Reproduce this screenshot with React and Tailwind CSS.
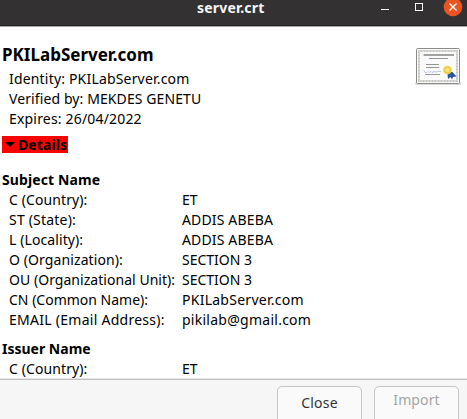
const subject = [
  ["C (Country):", "ET", "tracking-[0.1px]", "tracking-[0px]"],
  ["ST (State):", "ADDIS ABEBA", "tracking-[0.2px]", "tracking-[0.15px]"],
  ["L (Locality):", "ADDIS ABEBA", "tracking-[0.1px]", "tracking-[0.15px]"],
  ["O (Organization):", "SECTION 3", "tracking-[0.1px]", "tracking-[0px]"],
  ["OU (Organizational Unit):", "SECTION 3", "tracking-[0.04px]", "tracking-[0px]"],
  ["CN (Common Name):", "PKILabServer.com", "tracking-[0px]", "tracking-[0.26px]"],
  ["EMAIL (Email Address):", "pikilab@gmail.com", "tracking-[0.27px]", "tracking-[0.26px]"],
];

const issuer = [["C (Country):", "ET", "tracking-[0.1px]", "tracking-[0px]"]];

function Field({ row }) {
  const [label, value, labelTracking, valueTracking] = row;
  return (
    <div className="flex h-5">
      <dt className={`w-[173px] shrink-0 ${labelTracking}`}>{label}</dt>
      <dd className={valueTracking}>{value}</dd>
    </div>
  );
}

function CertificateIcon() {
  return (
    <svg width="48" height="42" viewBox="0 0 48 42" className="shrink-0">
      <rect x="1" y="36" width="46" height="3" rx="1.500" fill="#dadada" />
      <rect x="2.500" y="2.500" width="43" height="35" rx="1" fill="#fafafa" stroke="#8a8a87" />
      <rect x="5" y="5" width="38" height="30" fill="none" stroke="#c6c6c4" strokeWidth="2" />
      <rect x="5" y="5" width="38" height="30" fill="none" stroke="#e8e8e6" strokeDasharray="2 1" />
      <path d="M9.500 9h30.500" stroke="#8a8c8a" strokeWidth="1.600" />
      <path d="M15 12.500h19M12 18.500h13M12 21.500h13M11 28.500h15" stroke="#969694" />
      <path d="M10 24.500l1 2h2l1-1 1 1 2-1 1 1 2-1 2 .5 2-.5h3" fill="none" stroke="#9db5d6" strokeWidth=".7" />
      <path d="M36 26l-2.500 2 .5 5 2.500-2 1.500 2.500 1-2.500 3.500-.5-4-4.500z" fill="#2b559c" />
      <circle cx="33.500" cy="24" r="4" fill="#f3cf35" stroke="#f5da62" strokeDasharray="1.500 1" />
      <circle cx="33.500" cy="24" r="2" fill="#fbe98c" />
    </svg>
  );
}

export default function App() {
  return (
    <div className="flex h-[419px] w-[467px] flex-col overflow-hidden bg-white font-['Noto_Sans','Open_Sans',sans-serif] text-sm leading-5 whitespace-nowrap text-black">
      <header className="flex h-[27px] shrink-0 border-b border-[#aaa] bg-[#333132]">
        <div className="flex h-[26px] w-full border-b border-[#222021] pl-[197px]">
          <h1 className="h-[15px] w-[184px] leading-[15px] font-bold tracking-[0.2px] text-[#f5f5f5]">server.crt</h1>
          <svg width="86" height="25" viewBox="381 0 86 25" fill="none">
            <path d="M381 9.500h8" stroke="#fff" />
            <rect x="415.500" y="3.500" width="7" height="7" stroke="#fff" />
            <circle cx="453" cy="7" r="9.300" fill="#e95420" />
            <path d="M449.500 3.500l7 7M456.500 3.500l-7 7" stroke="#fff" strokeWidth="1.400" />
          </svg>
        </div>
      </header>

      <main className="h-[351px] overflow-hidden pl-0.5">
        <div className="flex h-[102px] justify-between pt-[17px]">
          <div>
            <h2 className="h-[25px] text-[17px] leading-[21px] font-bold">PKILabServer.com</h2>
            <div className="pl-[7px]">
              <p className="tracking-[0.18px]">Identity: PKILabServer.com</p>
              <p className="tracking-[0.1px]">Verified by: MEKDES GENETU</p>
              <p className="tracking-[0.18px]">Expires: 26/04/2022</p>
            </div>
          </div>
          <div className="pt-[2px] pr-[5px]">
            <CertificateIcon />
          </div>
        </div>

        <div className="mt-[7px] flex h-[17px] w-[66px] items-center gap-1 bg-[#f00] pl-[3px] font-bold">
          <svg width="10" height="6" viewBox="0 0 10 6" className="shrink-0">
            <path d="M0 0h10l-5 5z" fill="#000" />
          </svg>
          <span className="-ml-px tracking-[0.1px]">Details</span>
        </div>

        <h3 className="mt-[17px] h-5 font-bold tracking-[0.1px]">Subject Name</h3>
        <dl className="pl-[7px]">
          {subject.map((row) => (
            <Field key={row[0]} row={row} />
          ))}
        </dl>
        <h3 className="mt-[9px] h-5 font-bold">Issuer Name</h3>
        <dl className="pl-[7px]">
          {issuer.map((row) => (
            <Field key={row[0]} row={row} />
          ))}
        </dl>
      </main>

      <footer className="h-[41px] shrink-0 border-t border-[#e6e6e6] bg-[#f6f6f6]">
        <div className="flex h-10 gap-3 border-t border-[#c0c0c0] pt-[6px] pl-[277px]">
          <button className="h-[40px] w-[85px] shrink-0 rounded-[5px] border border-[#c4c4c4] bg-[#fafafa] pb-[7px] tracking-[0.2px] text-[#333]">
            <span>Close</span>
          </button>
          <button className="h-[40px] w-[85px] shrink-0 rounded-[5px] border border-[#c4c4c4] bg-[#fafafa] pb-[13px] tracking-[0.1px] text-[#a5a5a5]">
            <span>Import</span>
          </button>
        </div>
      </footer>
    </div>
  );
}
